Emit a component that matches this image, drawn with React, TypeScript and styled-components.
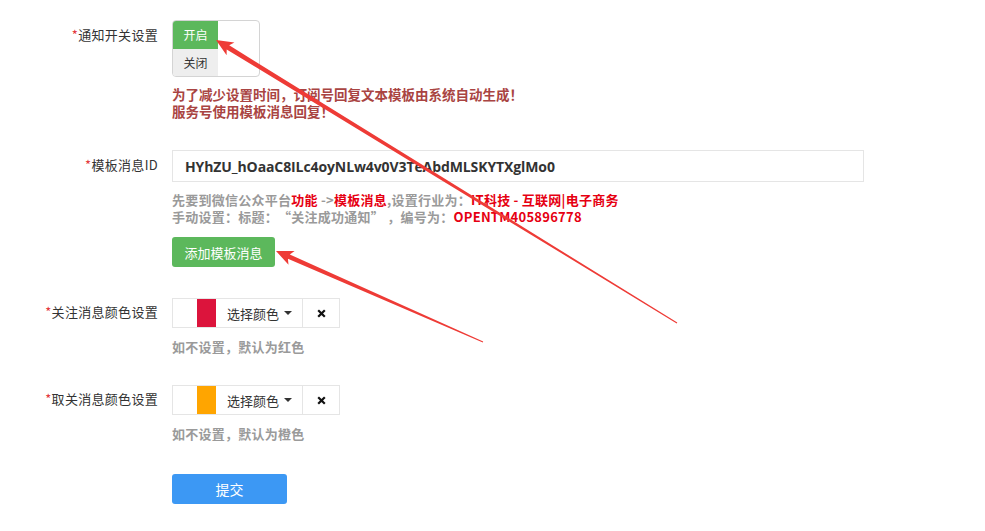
import React from "react";
import styled, { createGlobalStyle } from "styled-components";

const Global = createGlobalStyle`
  html, body { margin: 0; padding: 0; background: #fff; }
  body {
    font-family: "Noto Sans CJK SC", "Open Sans", sans-serif;
    color: #333;
    text-spacing-trim: space-all;
  }
  * { box-sizing: border-box; }
`;

const Page = styled.div`
  position: relative;
  width: 985px;
  height: 531px;
  padding-top: 20px;
  overflow: hidden;
`;

const Group = styled.div<{ $mb?: number }>`
  display: grid;
  grid-template-columns: 158px 1fr;
  column-gap: 14px;
  margin-bottom: ${(p) => (p.$mb ?? 30)}px;
`;

const Label = styled.div`
  text-align: right;
  font-size: 13px;
  line-height: 17px;
  padding-top: 6px;
  color: #333;
  white-space: nowrap;
  letter-spacing: 0.3px;
`;

const Star = styled.span`
  color: #e4393c;
`;

const Content = styled.div`
  display: flex;
  flex-direction: column;
  align-items: flex-start;
`;

const Switch = styled.div`
  width: 88px;
  height: 57px;
  border: 1px solid #d4d4d4;
  border-radius: 4px;
  overflow: hidden;
  display: flex;
  flex-direction: column;
`;

const SwitchOpt = styled.div<{ $on?: boolean }>`
  width: 45px;
  height: 28px;
  display: flex;
  align-items: center;
  justify-content: center;
  font-size: 12px;
  background: ${(p) => (p.$on ? "#5cb85c" : "#eeeeee")};
  color: ${(p) => (p.$on ? "#fff" : "#333")};
`;

const WarnText = styled.div`
  margin-top: 9px;
  font-size: 13.5px;
  line-height: 17px;
  font-weight: 700;
  color: #a94442;
`;

const Input = styled.div`
  width: 692px;
  height: 32px;
  border: 1px solid #e5e5e5;
  padding-left: 12px;
  display: flex;
  align-items: center;
  font-family: "Open Sans", "Noto Sans CJK SC", sans-serif;
  font-weight: 700;
  font-size: 14px;
  letter-spacing: -0.1px;
  color: #333;
`;

const Help = styled.div<{ $mt?: number }>`
  margin-top: ${(p) => (p.$mt ?? 9)}px;
  font-size: 13px;
  line-height: 17px;
  font-weight: 700;
  letter-spacing: 0.25px;
  color: #9a9a9a;
  white-space: pre;
`;

const Em = styled.span`
  color: #e60012;
`;

const Btn = styled.button<{ $variant: "green" | "blue"; $w: number }>`
  margin-top: ${(p) => (p.$variant === "green" ? "12px" : "2px")};
  width: ${(p) => p.$w}px;
  height: 30px;
  border: none;
  border-radius: 3px;
  background: ${(p) => (p.$variant === "green" ? "#5cb85c" : "#3c98f4")};
  color: #fff;
  font-family: "Noto Sans CJK SC", sans-serif;
  font-size: ${(p) => (p.$variant === "green" ? "13px" : "14px")};
  padding: 0;
  display: flex;
  align-items: center;
  justify-content: center;
`;

const Picker = styled.div`
  margin-top: 1px;
  width: 168px;
  height: 30px;
  border: 1px solid #e5e5e5;
  display: flex;
  align-items: stretch;
`;

const Blank = styled.div`
  width: 24px;
`;

const Swatch = styled.div<{ $c: string }>`
  width: 19px;
  background: ${(p) => p.$c};
`;

const Choose = styled.div`
  width: 87px;
  display: flex;
  align-items: center;
  padding-left: 11px;
  gap: 5px;
  font-size: 13px;
  color: #333;
  border-right: 1px solid #e5e5e5;
`;

const Caret = styled.span`
  width: 0;
  height: 0;
  border-left: 4px solid transparent;
  border-right: 4px solid transparent;
  border-top: 4px solid #333;
`;

const Clear = styled.div`
  flex: 1;
  display: flex;
  align-items: center;
  justify-content: center;
`;

const Overlay = styled.svg`
  position: absolute;
  left: 0;
  top: 0;
  pointer-events: none;
`;

function arrowPoints(tip: [number, number], tail: [number, number]) {
  const dx = tail[0] - tip[0];
  const dy = tail[1] - tip[1];
  const len = Math.hypot(dx, dy);
  const ux = dx / len, uy = dy / len;
  const nx = -uy, ny = ux;
  const L = 17, W = 7.5, w = 2.4, tw = 0.5;
  const bx = tip[0] + ux * L, by = tip[1] + uy * L;
  const nbx = tip[0] + ux * (L - 3), nby = tip[1] + uy * (L - 3);
  const pts = [
    [tip[0], tip[1]],
    [bx + nx * W, by + ny * W],
    [nbx + nx * w, nby + ny * w],
    [tail[0] + nx * tw, tail[1] + ny * tw],
    [tail[0] - nx * tw, tail[1] - ny * tw],
    [nbx - nx * w, nby - ny * w],
    [bx - nx * W, by - ny * W],
  ];
  return pts.map((p) => p.map((v) => v.toFixed(1)).join(",")).join(" ");
}

const XIcon = () => (
  <svg width="9" height="9" viewBox="0 0 9 9">
    <path d="M1.2 1.2 L7.8 7.8 M7.8 1.2 L1.2 7.8" stroke="#111" strokeWidth="2.2" strokeLinecap="butt" />
  </svg>
);

const ColorPicker = ({ color }: { color: string }) => (
  <Picker>
    <Blank />
    <Swatch $c={color} />
    <Choose>
      选择颜色
      <Caret />
    </Choose>
    <Clear>
      <XIcon />
    </Clear>
  </Picker>
);

export default function App() {
  return (
    <Page lang="zh-CN">
      <Global />
      <Group $mb={30}>
        <Label>
          <Star>*</Star>通知开关设置
        </Label>
        <Content>
          <Switch>
            <SwitchOpt $on>开启</SwitchOpt>
            <SwitchOpt>关闭</SwitchOpt>
          </Switch>
          <WarnText>
            为了减少设置时间，订阅号回复文本模板由系统自动生成！
            <br />
            服务号使用模板消息回复！
          </WarnText>
        </Content>
      </Group>

      <Group $mb={30}>
        <Label>
          <Star>*</Star>模板消息ID
        </Label>
        <Content>
          <Input>HYhZU_hOaaC8ILc4oyNLw4v0V3TeAbdMLSKYTXglMo0</Input>
          <Help>
            先要到微信公众平台<Em>功能</Em>{" ->"}<Em>模板消息</Em>{",设置行业为："}<Em>{"IT科技 - 互联网|电子商务"}</Em>
            {"\n"}
            {"手动设置：标题：“关注成功通知” ，编号为："}<Em>OPENTM405896778</Em>
          </Help>
          <Btn $variant="green" $w={103}>添加模板消息</Btn>
        </Content>
      </Group>

      <Group $mb={29}>
        <Label>
          <Star>*</Star>关注消息颜色设置
        </Label>
        <Content>
          <ColorPicker color="#dc143c" />
          <Help $mt={10}>如不设置，默认为红色</Help>
        </Content>
      </Group>

      <Group $mb={30}>
        <Label>
          <Star>*</Star>取关消息颜色设置
        </Label>
        <Content>
          <ColorPicker color="#ffa500" />
          <Help $mt={10}>如不设置，默认为橙色</Help>
        </Content>
      </Group>

      <Group $mb={0}>
        <div />
        <Content>
          <Btn $variant="blue" $w={115}>提交</Btn>
        </Content>
      </Group>

      <Overlay width="985" height="531" viewBox="0 0 985 531">
        <polygon points={arrowPoints([216, 40], [677, 323])} fill="#ee3b36" />
        <polygon points={arrowPoints([276, 251], [483, 342])} fill="#ee3b36" />
      </Overlay>
    </Page>
  );
}
